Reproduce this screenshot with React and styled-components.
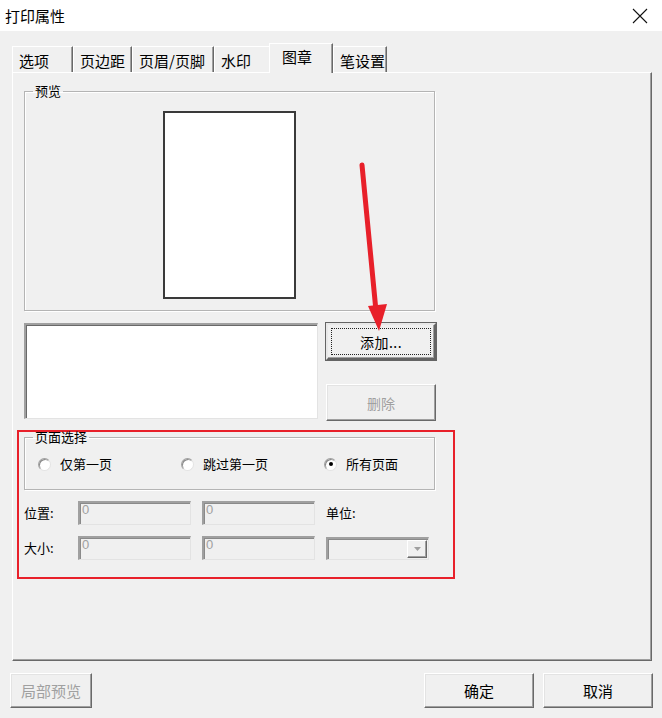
import React from "react";
import styled, { createGlobalStyle } from "styled-components";

const GlobalStyle = createGlobalStyle`
  html, body {
    margin: 0;
    padding: 0;
    background: #f0f0f0;
  }
  * {
    box-sizing: border-box;
  }
`;

const tabs = [
  { name: "选项", w: 61 },
  { name: "页边距", w: 59 },
  { name: "页眉/页脚", w: 82 },
  { name: "水印", w: 57 },
  { name: "图章", w: 64, active: true },
  { name: "笔设置", w: 54 },
];

const App = () => {
  return (
    <Window>
      <GlobalStyle />
      <TitleBar>
        <Title>打印属性</Title>
        <CloseButton>
          <svg width="16" height="16" viewBox="0 0 16 16">
            <path d="M1 1 L15 15 M15 1 L1 15" stroke="#111" strokeWidth="1.1" />
          </svg>
        </CloseButton>
      </TitleBar>

      <Content>
        <TabStrip>
          {tabs.map((t) => (
            <Tab key={t.name} $w={t.w} $active={t.active}>
              {t.name}
            </Tab>
          ))}
        </TabStrip>

        <Panel>
          <PreviewGroup>
            <Legend>预览</Legend>
            <Paper />
          </PreviewGroup>

          <StampRow>
            <ListBox />
            <ButtonColumn>
              <PushButton $default>添加...</PushButton>
              <PushButton disabled>删除</PushButton>
            </ButtonColumn>
          </StampRow>

          <Highlight>
            <PageGroup>
              <Legend>页面选择</Legend>
              <RadioRow>
                <Radio>
                  <RadioDot />
                  仅第一页
                </Radio>
                <Radio>
                  <RadioDot />
                  跳过第一页
                </Radio>
                <Radio>
                  <RadioDot $checked />
                  所有页面
                </Radio>
              </RadioRow>
            </PageGroup>

            <Fields>
              <FieldLabel>位置:</FieldLabel>
              <NumberBox readOnly value="0" />
              <NumberBox readOnly value="0" />
              <FieldLabel>单位:</FieldLabel>

              <FieldLabel>大小:</FieldLabel>
              <NumberBox readOnly value="0" />
              <NumberBox readOnly value="0" />
              <ComboBox>
                <ComboArrow>
                  <svg width="7" height="4" viewBox="0 0 7 4">
                    <path d="M0 0 L7 0 L3.5 4 Z" fill="#a0a0a0" />
                  </svg>
                </ComboArrow>
              </ComboBox>
            </Fields>
          </Highlight>
        </Panel>

        <Footer>
          <FooterButton disabled $w={82}>局部预览</FooterButton>
          <FooterRight>
            <FooterButton $w={110}>确定</FooterButton>
            <FooterButton $w={110}>取消</FooterButton>
          </FooterRight>
        </Footer>
      </Content>

      <Arrow width="40" height="180" viewBox="0 0 40 180">
        <path d="M2 2 L16 148" stroke="#e8202a" strokeWidth="5" strokeLinecap="round" />
        <path d="M8 143 L27 141 L19 168 Z" fill="#e8202a" />
      </Arrow>
    </Window>
  );
};

export default App;

const Window = styled.div`
  position: relative;
  width: 662px;
  height: 718px;
  background: #f0f0f0;
  font-family: "Noto Sans CJK SC", "Liberation Sans", sans-serif;
  color: #000;
  overflow: hidden;
`;

const TitleBar = styled.div`
  height: 31px;
  background: #ffffff;
  display: flex;
  align-items: center;
  justify-content: space-between;
  padding: 0 14px 0 5px;
`;

const Title = styled.div`
  font-size: 15px;
  line-height: 20px;
`;

const CloseButton = styled.div`
  display: flex;
  width: 16px;
  height: 16px;
`;

const Content = styled.div`
  padding: 12px 9px 0 10px;
`;

const TabStrip = styled.div`
  display: flex;
  align-items: flex-end;
  height: 29px;
  margin-left: 2px;
  position: relative;
  z-index: 1;
`;

const Tab = styled.div`
  width: ${(p) => p.$w}px;
  height: ${(p) => (p.$active ? 30 : 26)}px;
  margin-left: ${(p) => (p.$active ? -2 : 0)}px;
  margin-bottom: ${(p) => (p.$active ? -1 : 0)}px;
  padding-left: ${(p) => (p.$active ? 12 : 6)}px;
  padding-bottom: ${(p) => (p.$active ? 3 : 0)}px;
  padding-top: ${(p) => (p.$active ? 0 : 2)}px;
  display: flex;
  align-items: center;
  font-size: 15px;
  line-height: 18px;
  background: #f0f0f0;
  border-top: 1px solid #ffffff;
  border-left: 1px solid #ffffff;
  border-right: 1px solid #696969;
  box-shadow: inset -1px 0 0 #a0a0a0;
  white-space: nowrap;
`;

const Panel = styled.div`
  width: 640px;
  height: 589px;
  margin-left: 2px;
  border-top: 1px solid #ffffff;
  border-left: 1px solid #ffffff;
  border-right: 1px solid #696969;
  border-bottom: 1px solid #696969;
  box-shadow: inset -1px -1px 0 #a0a0a0;
  padding: 10px 11px;
  display: flex;
  flex-direction: column;
`;

const Group = styled.fieldset`
  margin: 0;
  padding: 0;
  min-inline-size: 0;
  border: 1px solid #b4b4b4;
  box-shadow: 1px 1px 0 #ffffff, inset 1px 1px 0 #ffffff;
  width: 411px;
`;

const Legend = styled.legend`
  margin-left: 8px;
  padding: 0 2px;
  font-size: 13px;
  line-height: 16px;
`;

const PreviewGroup = styled(Group)`
  height: 228px;
  display: flex;
  flex-direction: column;
  align-items: center;
`;

const Paper = styled.div`
  width: 133px;
  height: 188px;
  margin-top: 12px;
  background: #ffffff;
  border: 2px solid #3a3a3a;
`;

const StampRow = styled.div`
  display: flex;
  gap: 8px;
  margin-top: 12px;
`;

const ListBox = styled.div`
  width: 294px;
  height: 96px;
  background: #ffffff;
  border-top: 2px solid #a0a0a0;
  border-left: 2px solid #a0a0a0;
  border-right: 1px solid #e3e3e3;
  border-bottom: 1px solid #e3e3e3;
  box-shadow: inset 1px 1px 0 #696969;
`;

const ButtonColumn = styled.div`
  display: flex;
  flex-direction: column;
  justify-content: space-between;
  height: 98px;
`;

const PushButton = styled.button`
  width: 110px;
  height: 37px;
  padding: 0;
  font-family: inherit;
  font-size: 14px;
  line-height: 18px;
  letter-spacing: ${(p) => (p.$default ? "0.5px" : "0")};
  color: ${(p) => (p.disabled ? "#a0a0a0" : "#000")};
  background: #f0f0f0;
  border-style: solid;
  border-width: ${(p) => (p.$default ? "2px" : "1px")};
  border-color: ${(p) =>
    p.$default
      ? "#e8e8e8 #646464 #646464 #e8e8e8"
      : "#ffffff #696969 #696969 #ffffff"};
  box-shadow: ${(p) =>
    p.$default
      ? "0 0 0 1px #646464, inset -1px -1px 0 #a0a0a0"
      : "inset -1px -1px 0 #a0a0a0, inset 1px 1px 0 #e3e3e3"};
  outline: ${(p) => (p.$default ? "1px dotted #222" : "none")};
  outline-offset: -6px;
`;

const Highlight = styled.div`
  width: 438px;
  margin: 9px 0 0 -7px;
  border: 2px solid #e8202a;
  padding: 0 0 17px 5px;
`;

const PageGroup = styled(Group)`
  margin-top: -3px;
  padding: 0 0 17px 0;
`;

const RadioRow = styled.div`
  display: grid;
  grid-template-columns: 143px 143px 120px;
  margin: 11px 0 0 13px;
`;

const Radio = styled.label`
  display: flex;
  align-items: center;
  gap: 9px;
  font-size: 13px;
  line-height: 16px;
`;

const RadioDot = styled.span`
  position: relative;
  width: 13px;
  height: 13px;
  border-radius: 50%;
  background: #ffffff;
  border: 1px solid;
  border-color: #a0a0a0 #e3e3e3 #e3e3e3 #a0a0a0;
  box-shadow: inset 1px 1px 0 #8a8a8a;

  &::after {
    content: "";
    display: ${(p) => (p.$checked ? "block" : "none")};
    position: absolute;
    left: 3.5px;
    top: 3.5px;
    width: 4px;
    height: 4px;
    border-radius: 50%;
    background: #000;
  }
`;

const Fields = styled.div`
  display: grid;
  grid-template-columns: 43px 113px 113px 103px;
  grid-auto-rows: 24px;
  column-gap: 11px;
  row-gap: 11px;
  margin-top: 11px;
  align-items: center;
`;

const FieldLabel = styled.div`
  font-size: 13px;
  line-height: 16px;
  white-space: nowrap;
`;

const NumberBox = styled.input`
  width: 113px;
  height: 24px;
  padding: 0 2px 8px;
  margin: 0;
  font-family: "Liberation Sans", sans-serif;
  font-size: 13px;
  line-height: 14px;
  color: #a0a0a0;
  background: #f0f0f0;
  border-style: solid;
  border-width: 2px 1px 1px 2px;
  border-color: #a0a0a0 #e3e3e3 #e3e3e3 #a0a0a0;
  box-shadow: inset 1px 1px 0 #8a8a8a;
  outline: none;
`;

const ComboBox = styled.div`
  width: 103px;
  height: 23px;
  display: flex;
  justify-content: flex-end;
  align-items: stretch;
  padding: 1px;
  background: #f0f0f0;
  border-style: solid;
  border-width: 2px 1px 1px 2px;
  border-color: #a0a0a0 #e3e3e3 #e3e3e3 #a0a0a0;
  box-shadow: inset 1px 1px 0 #8a8a8a;
`;

const ComboArrow = styled.div`
  width: 20px;
  display: flex;
  align-items: center;
  justify-content: center;
  border: 1px solid;
  border-color: #ffffff #696969 #696969 #ffffff;
  box-shadow: inset -1px -1px 0 #a0a0a0;
`;

const Footer = styled.div`
  display: flex;
  justify-content: space-between;
  margin-top: 12px;
`;

const FooterRight = styled.div`
  display: flex;
  gap: 9px;
`;

const FooterButton = styled.button`
  width: ${(p) => p.$w}px;
  height: 35px;
  padding: 0;
  font-family: inherit;
  font-size: 15px;
  line-height: 18px;
  color: ${(p) => (p.disabled ? "#a0a0a0" : "#000")};
  background: #f0f0f0;
  border: 1px solid;
  border-color: #ffffff #696969 #696969 #ffffff;
  box-shadow: inset -1px -1px 0 #a0a0a0, inset 1px 1px 0 #e3e3e3;
`;

const Arrow = styled.svg`
  position: absolute;
  left: 360px;
  top: 163px;
  overflow: visible;
`;
